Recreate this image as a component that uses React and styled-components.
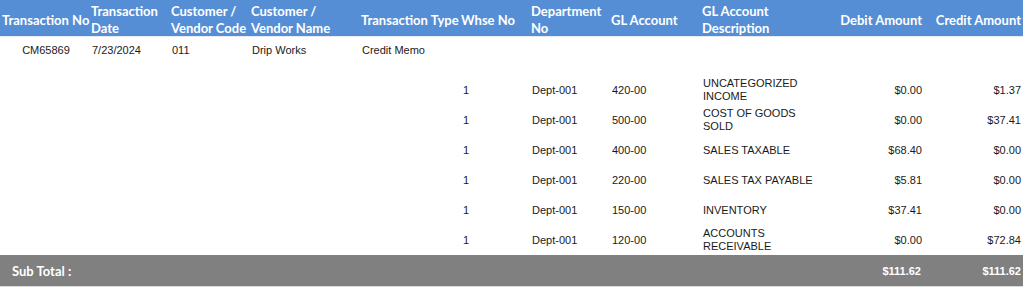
import React from "react";
import styled, { createGlobalStyle } from "styled-components";

const GlobalStyle = createGlobalStyle`
  html, body { margin: 0; padding: 0; background: #ffffff; }
  body { font-family: "Liberation Sans", Arial, sans-serif; }
`;

const COLS = "89px 80px 80px 110px 100px 70px 80px 91px 115px 109px 99px";

const Table = styled.div`
  width: 1023px;
  display: flex;
  flex-direction: column;
`;

const HeaderRow = styled.div`
  display: grid;
  grid-template-columns: ${COLS};
  height: 36px;
  background: #558ed5;
  border-bottom: 1px solid #e6ebf2;
`;

const HeaderCell = styled.div`
  display: flex;
  align-items: center;
  justify-content: ${(p) => (p.$align === "right" ? "flex-end" : "flex-start")};
  padding: 3px ${(p) => (p.$align === "right" ? "2px" : "0")} 0 2px;
  font-family: Lato, "Open Sans", sans-serif;
  font-weight: 700;
  font-size: 13px;
  line-height: 17px;
  color: #ffffff;
  white-space: nowrap;
  text-align: ${(p) => p.$align || "left"};
`;

const Row = styled.div`
  display: grid;
  grid-template-columns: ${COLS};
  height: ${(p) => p.$h}px;
  align-items: ${(p) => (p.$top ? "start" : "center")};
  padding-top: ${(p) => (p.$top ? 7 : 0)}px;
  box-sizing: border-box;
`;

const Cell = styled.div`
  font-family: "Liberation Sans", Arial, sans-serif;
  font-size: 11px;
  line-height: 13px;
  color: #1a1a1a;
  padding: 0 ${(p) => (p.$align === "right" ? "2px" : "0")} 0 ${(p) => (p.$align === "right" ? "0" : p.$pl || "3px")};
  text-align: ${(p) => p.$align || "left"};
  white-space: nowrap;
`;

const SubTotalRow = styled.div`
  display: grid;
  grid-template-columns: ${COLS};
  height: 31px;
  align-items: center;
  background: #808080;
  border-bottom: 1px solid #d9d9d9;
`;

const SubTotalLabel = styled.div`
  grid-column: 1 / span 9;
  padding-left: 12px;
  font-family: Lato, "Open Sans", sans-serif;
  font-weight: 700;
  font-size: 13px;
  color: #ffffff;
`;

const SubTotalAmount = styled.div`
  font-family: "Liberation Sans", Arial, sans-serif;
  font-weight: 700;
  font-size: 11px;
  color: #ffffff;
  text-align: right;
  padding-right: ${(p) => p.$pr}px;
`;

const headers = [
  { t: ["Transaction No"] },
  { t: ["Transaction", "Date"] },
  { t: ["Customer /", "Vendor Code"] },
  { t: ["Customer /", "Vendor Name"] },
  { t: ["Transaction Type"] },
  { t: ["Whse No"] },
  { t: ["Department", "No"] },
  { t: ["GL Account"] },
  { t: ["GL Account", "Description"] },
  { t: ["Debit Amount"], align: "right" },
  { t: ["Credit Amount"], align: "right" },
];

const lines = [
  { gl: "420-00", desc: ["UNCATEGORIZED", "INCOME"], debit: "$0.00", credit: "$1.37" },
  { gl: "500-00", desc: ["COST OF GOODS", "SOLD"], debit: "$0.00", credit: "$37.41" },
  { gl: "400-00", desc: ["SALES TAXABLE"], debit: "$68.40", credit: "$0.00" },
  { gl: "220-00", desc: ["SALES TAX PAYABLE"], debit: "$5.81", credit: "$0.00" },
  { gl: "150-00", desc: ["INVENTORY"], debit: "$37.41", credit: "$0.00" },
  { gl: "120-00", desc: ["ACCOUNTS", "RECEIVABLE"], debit: "$0.00", credit: "$72.84" },
];

const Lines = ({ parts }) =>
  parts.map((p, i) => (
    <React.Fragment key={i}>
      {i > 0 && <br />}
      {p}
    </React.Fragment>
  ));

export default function App() {
  return (
    <>
      <GlobalStyle />
      <Table>
        <HeaderRow>
          {headers.map((h, i) => (
            <HeaderCell key={i} $align={h.align}>
              <span>
                <Lines parts={h.t} />
              </span>
            </HeaderCell>
          ))}
        </HeaderRow>
        <Row $h={38} $top>
          <Cell $align="center">CM65869</Cell>
          <Cell>7/23/2024</Cell>
          <Cell>011</Cell>
          <Cell>Drip Works</Cell>
          <Cell>Credit Memo</Cell>
          <Cell />
          <Cell />
          <Cell />
          <Cell />
          <Cell />
          <Cell />
        </Row>
        {lines.map((l, i) => (
          <Row key={i} $h={30}>
            <Cell />
            <Cell />
            <Cell />
            <Cell />
            <Cell />
            <Cell $pl="4px">1</Cell>
            <Cell>Dept-001</Cell>
            <Cell>{l.gl}</Cell>
            <Cell>
              <Lines parts={l.desc} />
            </Cell>
            <Cell $align="right">{l.debit}</Cell>
            <Cell $align="right">{l.credit}</Cell>
          </Row>
        ))}
        <SubTotalRow>
          <SubTotalLabel>Sub Total :</SubTotalLabel>
          <SubTotalAmount $pr={3}>$111.62</SubTotalAmount>
          <SubTotalAmount $pr={2}>$111.62</SubTotalAmount>
        </SubTotalRow>
      </Table>
    </>
  );
}
